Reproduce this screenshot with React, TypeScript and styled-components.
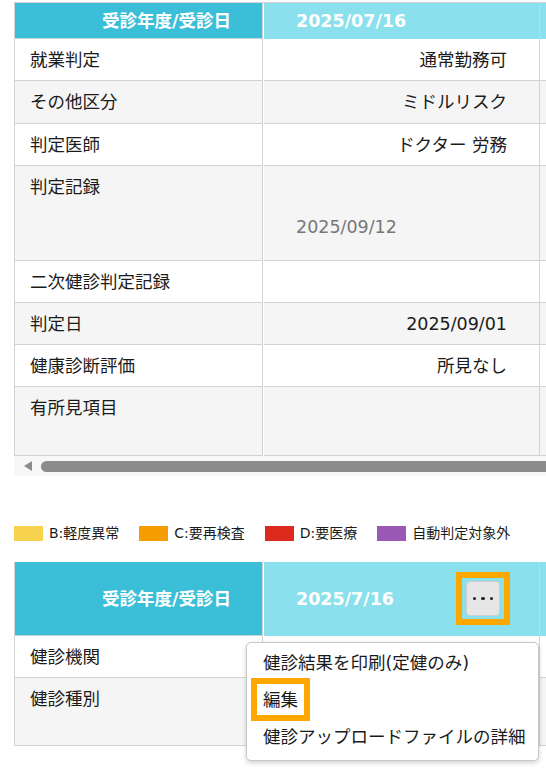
import styled, { createGlobalStyle } from "styled-components"

type ResultRow = {
  label: string
  value?: string
  note?: string
  height: number
}

const resultRows: ResultRow[] = [
  { label: "就業判定", value: "通常勤務可", height: 42 },
  { label: "その他区分", value: "ミドルリスク", height: 43 },
  { label: "判定医師", value: "ドクター 労務", height: 42 },
  { label: "判定記録", note: "2025/09/12", height: 95 },
  { label: "二次健診判定記録", height: 42 },
  { label: "判定日", value: "2025/09/01", height: 42 },
  { label: "健康診断評価", value: "所見なし", height: 42 },
  { label: "有所見項目", height: 69 }
]

const checkupRows: ResultRow[] = [
  { label: "健診機関", height: 42 },
  { label: "健診種別", height: 68 }
]

const legendItems = [
  { color: "#f7d34d", text: "B:軽度異常" },
  { color: "#f59d00", text: "C:要再検査" },
  { color: "#dc2a1f", text: "D:要医療" },
  { color: "#9a59b5", text: "自動判定対象外" }
]

const menuItems = ["健診結果を印刷(定健のみ)", "編集", "健診アップロードファイルの詳細"]

const GlobalStyle = createGlobalStyle`
  body {
    margin: 0;
    background: #ffffff;
    font-family: "DejaVu Sans", "Noto Sans CJK JP", sans-serif;
    color: #1b1b1b;
  }
`

const ResultTable = ({
  headerDate,
  headerHeight,
  rows,
  showMenu
}: {
  headerDate: string
  headerHeight: number
  rows: ResultRow[]
  showMenu?: boolean
}) => {
  return (
    <Sheet>
      <LabelColumn>
        <HeaderCell $height={headerHeight} $tone="dark">
          受診年度/受診日
        </HeaderCell>
        {rows.map((row, i) => (
          <LabelCell key={row.label} $height={row.height} $striped={i % 2 === 1}>
            {row.label}
          </LabelCell>
        ))}
      </LabelColumn>
      <DataViewport>
        <DataColumn>
          <HeaderCell $height={headerHeight} $tone="light">
            <span>{headerDate}</span>
            {showMenu ? (
              <ButtonFrame>
                <MoreButton>
                  <Dot />
                  <Dot />
                  <Dot />
                </MoreButton>
              </ButtonFrame>
            ) : null}
          </HeaderCell>
          {rows.map((row, i) => (
            <ValueCell key={row.label} $height={row.height} $striped={i % 2 === 1}>
              {row.value ? <Value>{row.value}</Value> : null}
              {row.note ? <Note>{row.note}</Note> : null}
            </ValueCell>
          ))}
        </DataColumn>
        <DataColumn>
          <HeaderCell $height={headerHeight} $tone="light" />
          {rows.map((row, i) => (
            <ValueCell key={row.label} $height={row.height} $striped={i % 2 === 1} />
          ))}
        </DataColumn>
      </DataViewport>
      {showMenu ? (
        <ActionMenu>
          {menuItems.map((item) => (
            <MenuItem key={item}>
              {item === "編集" ? <Marked>{item}</Marked> : item}
            </MenuItem>
          ))}
        </ActionMenu>
      ) : null}
    </Sheet>
  )
}

export default function App() {
  return (
    <>
      <GlobalStyle />
      <Page>
        <TopTable>
          <ResultTable headerDate="2025/07/16" headerHeight={36} rows={resultRows} />
          <ScrollTrack>
            <ScrollArrow />
            <ScrollThumb />
          </ScrollTrack>
        </TopTable>
        <Legend>
          {legendItems.map((item) => (
            <LegendItem key={item.text}>
              <Swatch color={item.color} />
              <span>{item.text}</span>
            </LegendItem>
          ))}
        </Legend>
        <BottomTable>
          <ResultTable
            headerDate="2025/7/16"
            headerHeight={74}
            rows={checkupRows}
            showMenu
          />
        </BottomTable>
      </Page>
    </>
  )
}

const Page = styled.div`
  box-sizing: border-box;
  width: 100%;
  height: 778px;
  padding: 2px 0 0 14px;
  overflow: hidden;
`

const TopTable = styled.div`
  width: 532px;
  overflow: hidden;
  border-top: 1px solid #d3d3d3;
`

const BottomTable = styled.div`
  margin-top: 21px;
  width: 532px;
`

const Sheet = styled.div`
  position: relative;
  display: flex;
  width: 532px;
`

const LabelColumn = styled.div`
  flex: 0 0 249px;
  box-sizing: border-box;
  border-left: 1px solid #d3d3d3;
  border-right: 1px solid #d3d3d3;
`

const DataViewport = styled.div`
  display: flex;
  flex: 1;
  margin-left: 1px;
  overflow: hidden;
`

const DataColumn = styled.div`
  flex: 0 0 276px;
  box-sizing: border-box;
  border-right: 1px solid #d3d3d3;
`

const HeaderCell = styled.div<{ $height: number; $tone: "dark" | "light" }>`
  display: flex;
  align-items: center;
  justify-content: ${(p) => (p.$tone === "dark" ? "flex-end" : "space-between")};
  box-sizing: border-box;
  height: ${(p) => p.$height}px;
  padding: ${(p) => (p.$tone === "dark" ? "0 31px 0 0" : "0 29px 0 32px")};
  background: ${(p) => (p.$tone === "dark" ? "#3bbfd8" : "#8ae0ec")};
  border-bottom: 1px solid ${(p) => (p.$tone === "dark" ? "#c9d3d6" : "#8ae0ec")};
  color: #ffffff;
  font-size: 17.5px;
  font-weight: 700;
  line-height: 24px;
`

const LabelCell = styled.div<{ $height: number; $striped: boolean }>`
  box-sizing: border-box;
  height: ${(p) => p.$height}px;
  padding: 9px 0 0 15px;
  background: ${(p) => (p.$striped ? "#f5f5f5" : "#ffffff")};
  border-bottom: 1px solid #d3d3d3;
  font-size: 17.5px;
  line-height: 24px;
  white-space: nowrap;
`

const ValueCell = styled.div<{ $height: number; $striped: boolean }>`
  box-sizing: border-box;
  height: ${(p) => p.$height}px;
  padding: 9px 32px 0 32px;
  background: ${(p) => (p.$striped ? "#f5f5f5" : "#ffffff")};
  border-bottom: 1px solid #d3d3d3;
  font-size: 17.5px;
  line-height: 24px;
  white-space: nowrap;
`

const Value = styled.div`
  text-align: right;
`

const Note = styled.div`
  margin-top: 40px;
  color: #777777;
`

const ScrollTrack = styled.div`
  display: flex;
  align-items: center;
  gap: 9px;
  height: 20px;
  padding-left: 10px;
  background: #f7f7f7;
`

const ScrollArrow = styled.span`
  width: 0;
  height: 0;
  border-top: 5px solid transparent;
  border-bottom: 5px solid transparent;
  border-right: 8px solid #8c8c8c;
`

const ScrollThumb = styled.span`
  flex: 1;
  height: 11px;
  border-radius: 6px 0 0 6px;
  background: #8c8c8c;
`

const Legend = styled.div`
  display: flex;
  align-items: center;
  gap: 20px;
  height: 15px;
  margin-top: 50px;
`

const LegendItem = styled.div`
  display: flex;
  align-items: center;
  gap: 6px;
  font-size: 14px;
  line-height: 15px;
  color: #1b1b1b;
`

const Swatch = styled.span<{ color: string }>`
  width: 29px;
  height: 15px;
  background: ${(p) => p.color};
`

const ButtonFrame = styled.span`
  display: flex;
  padding: 3px 4px;
  border: 6px solid #fca800;
`

const MoreButton = styled.button`
  display: flex;
  align-items: center;
  justify-content: center;
  gap: 5px;
  box-sizing: border-box;
  width: 34px;
  height: 35px;
  padding: 0;
  border: 1px solid #cfcfcf;
  border-radius: 4px;
  background: #e6e6e6;
`

const Dot = styled.span`
  width: 3.5px;
  height: 3.5px;
  border-radius: 50%;
  background: #222222;
`

const ActionMenu = styled.div`
  position: absolute;
  left: 232px;
  top: 80px;
  box-sizing: border-box;
  width: 293px;
  height: 119px;
  padding-top: 1px;
  border: 1px solid #c8c8c8;
  border-radius: 5px;
  background: #ffffff;
  box-shadow: 0 2px 5px rgba(0, 0, 0, 0.18);
`

const MenuItem = styled.div`
  display: flex;
  align-items: center;
  height: 37px;
  padding-left: 16px;
  font-size: 17.5px;
  line-height: 24px;
  white-space: nowrap;
`

const Marked = styled.span`
  margin-left: -6px;
  padding: 4px 6px 3px;
  outline: 6px solid #fca800;
`
